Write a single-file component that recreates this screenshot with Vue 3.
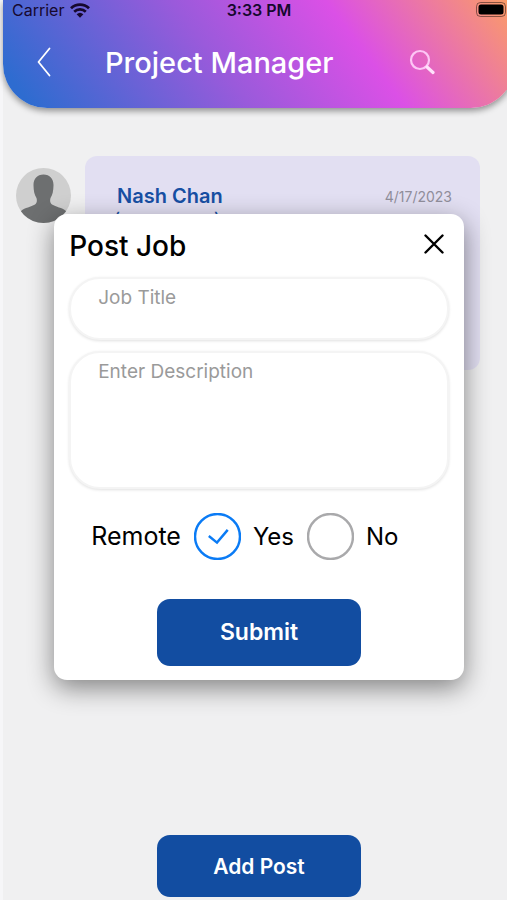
<script setup>
import { ref } from 'vue'

const title = ref('')
const description = ref('')
const remote = ref('yes')
const open = ref(true)
</script>

<template>
  <div class="page">
    <div class="screen">
      <header class="header">
        <div class="status">
          <span class="carrier">
            Carrier
            <svg width="20" height="15" viewBox="0 0 20 15" aria-hidden="true">
              <path d="M1 5.2a13 13 0 0 1 18 0" fill="none" stroke="currentColor" stroke-width="2.8" />
              <path d="M4.2 8.7a8.3 8.3 0 0 1 11.6 0" fill="none" stroke="currentColor" stroke-width="2.6" />
              <path d="M10 14.8 6.6 11.3a5 5 0 0 1 6.8 0z" fill="currentColor" />
            </svg>
          </span>
          <span class="time">3:33 PM</span>
          <span class="power">
            <svg width="30" height="16" viewBox="0 0 30 16" aria-hidden="true">
              <rect x="0.5" y="0.5" width="29" height="14" rx="4" fill="none" stroke="#000" stroke-opacity=".45" />
              <rect x="2.5" y="2.5" width="25" height="10" rx="2.5" fill="#000" />
            </svg>
          </span>
        </div>
        <div class="bar">
          <button class="icon-btn" type="button" aria-label="Back">
            <svg width="14" height="30" viewBox="0 0 14 30">
              <path d="M12.5 1.5 1.5 15l11 13.5" fill="none" stroke="#fff" stroke-width="1.8" stroke-linecap="round" stroke-linejoin="round" />
            </svg>
          </button>
          <h1>Project Manager</h1>
          <button class="icon-btn" type="button" aria-label="Search">
            <svg width="26" height="26" viewBox="0 0 26 26">
              <circle cx="11" cy="11" r="9" fill="none" stroke="#fdc6f5" stroke-width="2.2" />
              <path d="m18 18 6 5.500" fill="none" stroke="#ffe2fb" stroke-width="3.2" stroke-linecap="round" />
            </svg>
          </button>
        </div>
      </header>

      <main class="feed">
        <svg class="avatar" viewBox="0 0 55 55" role="img" aria-label="Nash Chan">
          <defs><clipPath id="round"><circle cx="27.5" cy="27.5" r="27.5" /></clipPath></defs>
          <g clip-path="url(#round)">
            <rect width="55" height="55" fill="#cfcfcf" />
            <path d="M27.5 6.500c-6.500 0-10.200 4.400-10 11 .1 5.500 1 9.500 3 12.500.8 3 .3 5-1.500 6.500C15 39 9 39.500 5 43v13h45V43c-4-3.500-10-4-14-6.500-1.800-1.500-2.300-3.500-1.500-6.500 2-3 2.900-7 3-12.500.2-6.600-3.500-11-10-11z" fill="#6d6f70" />
          </g>
        </svg>
        <article class="card">
          <div class="card-head">
            <h2>Nash Chan</h2>
            <time datetime="2023-04-17">4/17/2023</time>
          </div>
          <p class="role"><span>(</span><span>)</span></p>
        </article>
      </main>

      <footer class="footer">
        <button class="primary" type="button" @click="open = true">Add Post</button>
      </footer>

      <div v-if="open" class="overlay">
        <form class="modal" role="dialog" aria-labelledby="dialog-title" @submit.prevent>
          <div class="modal-head">
            <h2 id="dialog-title">Post Job</h2>
            <button class="icon-btn" type="button" aria-label="Close" @click="open = false">
              <svg width="20" height="20" viewBox="0 0 20 20">
                <path d="m1.500 1.500 17 17m0-17-17 17" fill="none" stroke="#000" stroke-width="2.4" stroke-linecap="round" />
              </svg>
            </button>
          </div>
          <input v-model="title" class="field title" type="text" placeholder="Job Title" aria-label="Job Title" />
          <textarea v-model="description" class="field description" placeholder="Enter Description" aria-label="Enter Description"></textarea>
          <div class="choices" role="radiogroup" aria-labelledby="remote-title">
            <span id="remote-title" class="choices-title">Remote</span>
            <label class="choice">
              <input v-model="remote" type="radio" name="remote" value="yes" />
              <svg class="ring" viewBox="0 0 46 46" aria-hidden="true">
                <circle cx="23" cy="23" r="22" />
                <path class="tick" d="m14.500 22.500 8 6.500L33 16.500" />
              </svg>
              Yes
            </label>
            <label class="choice">
              <input v-model="remote" type="radio" name="remote" value="no" />
              <svg class="ring" viewBox="0 0 46 46" aria-hidden="true">
                <circle cx="23" cy="23" r="22" />
                <path class="tick" d="m14.500 22.500 8 6.500L33 16.500" />
              </svg>
              No
            </label>
          </div>
          <button class="primary submit" type="submit">Submit</button>
        </form>
      </div>
    </div>
  </div>
</template>

<style>
body {
  background: #f0f0f1;
}
</style>

<style scoped>
.page {
  overflow: hidden;
  background: #f6f6f8;
  font-family: Inter, "Liberation Sans", sans-serif;
  color: #000;
}

.page * {
  box-sizing: border-box;
}

.screen {
  position: relative;
  display: flex;
  flex-direction: column;
  min-height: 100vh;
  margin: 0 -8px 0 3px;
  background: #f0f0f1;
}

h1,
h2,
p {
  margin: 0;
}

button {
  font: inherit;
  border: 0;
  cursor: pointer;
}

.header {
  height: 108px;
  border-radius: 0 0 44px 44px;
  background: linear-gradient(53deg, #2e6cd0 5%, #9a5adb 42%, #db50e6 68%, #fc9f62 100%);
  box-shadow: 0 3px 6px rgba(0, 0, 0, 0.4);
}

.status {
  display: grid;
  grid-template-columns: 1fr auto 1fr;
  align-items: center;
  height: 20px;
  padding: 0 9px;
  font-size: 16px;
  color: #16082e;
}

.carrier {
  display: flex;
  align-items: center;
  gap: 6px;
}

.time {
  font-weight: 600;
}

.power {
  display: flex;
  justify-content: flex-end;
}

.bar {
  display: flex;
  align-items: center;
  height: 84px;
  padding: 0 80px 0 34px;
}

.bar h1 {
  flex: 1;
  padding-left: 54px;
  font-size: 29px;
  font-weight: 500;
  color: #fff;
}

.icon-btn {
  display: flex;
  padding: 0;
  background: none;
}

.feed {
  display: flex;
  align-items: flex-start;
  flex: 1;
  gap: 14px;
  padding: 48px 35px 48px 13px;
}

.avatar {
  flex: none;
  width: 55px;
  height: 55px;
  margin-top: 12px;
}

.card {
  flex: 1;
  min-height: 214px;
  padding: 26px 28px 26px 32px;
  border-radius: 12px;
  background: #e2dff2;
}

.card-head {
  display: flex;
  align-items: center;
  justify-content: space-between;
}

.card h2 {
  font-size: 20px;
  line-height: 28px;
  font-weight: 600;
  color: #174fa3;
}

.card time {
  font-size: 14px;
  color: #908e9b;
}

.role {
  display: flex;
  justify-content: space-between;
  width: 108px;
  margin-left: -4px;
  font-size: 20px;
  line-height: 20px;
  color: #174fa3;
}

.footer {
  display: flex;
  justify-content: center;
  padding-bottom: 3px;
}

.primary {
  width: 40%;
  height: 62px;
  border-radius: 13px;
  background: #124da1;
  font-size: 21px;
  font-weight: 600;
  color: #fff;
}

.overlay {
  position: absolute;
  inset: 0;
  display: flex;
  align-items: center;
  justify-content: center;
  padding-bottom: 7px;
}

.modal {
  display: flex;
  flex-direction: column;
  width: 80%;
  padding: 14px 15px;
  border-radius: 13px;
  background: #fff;
  box-shadow: 0 8px 26px rgba(0, 0, 0, 0.46);
}

.modal-head {
  display: flex;
  align-items: flex-start;
  justify-content: space-between;
  height: 36px;
  padding: 0 5px 0 0;
  margin-bottom: 13px;
}

.modal-head h2 {
  font-size: 28px;
  line-height: 36px;
  font-weight: 500;
}

.modal-head .icon-btn {
  padding-top: 6px;
}

.field {
  display: block;
  width: 100%;
  margin: 0;
  border: 2px solid #f4f4f4;
  border-radius: 31px;
  outline: 0;
  background: #fff;
  box-shadow: 0 1px 3px rgba(0, 0, 0, 0.12);
  font-family: inherit;
  font-size: 19px;
  line-height: 24px;
  resize: none;
}

.field::placeholder {
  color: #9a9a9a;
  opacity: 1;
}

.title {
  height: 63px;
  padding: 7px 27px 28px;
  margin-bottom: 11px;
}

.description {
  height: 138px;
  padding: 7px 27px;
}

.choices {
  display: flex;
  align-items: center;
  gap: 13px;
  margin: 24px 0 39px;
  padding-left: 22px;
  font-size: 24px;
}

.choices-title {
  font-size: 25px;
}

.choice {
  position: relative;
  display: flex;
  align-items: center;
  gap: 12px;
  cursor: pointer;
}

.choice input {
  position: absolute;
  left: 0;
  width: 47px;
  height: 47px;
  margin: 0;
  opacity: 0;
}

.ring {
  width: 47px;
  height: 47px;
  fill: none;
  stroke: #a9a9ab;
  stroke-width: 2.4;
}

.tick {
  display: none;
}

.choice input:checked + .ring {
  stroke: #0a7bf5;
}

.choice input:checked + .ring .tick {
  display: block;
}

.submit {
  align-self: center;
  width: 54%;
  height: 67px;
  font-size: 23px;
}
</style>
